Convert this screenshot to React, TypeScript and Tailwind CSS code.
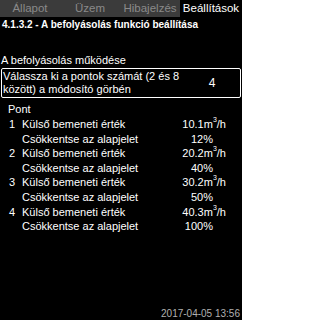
import React from "react";

const rows = [
  { n: "1", v: "10.1", p: "12%" },
  { n: "2", v: "20.2", p: "40%" },
  { n: "3", v: "30.2", p: "50%" },
  { n: "4", v: "40.3", p: "100%" },
];

function Unit({ v }: { v: string }) {
  return (
    <span className="whitespace-nowrap">
      {v}m<sup className="text-[7px] relative -top-[1px] align-top leading-none">3</sup>/h
    </span>
  );
}

export default function App() {
  return (
    <div
      className="w-[242px] h-[320px] bg-black text-white flex flex-col overflow-hidden"
      style={{ fontFamily: '"Liberation Sans", Arial, sans-serif' }}
    >
      <div className="flex h-[17px] bg-[#3b3b3b] text-[11.5px] leading-[17px]">
        <div className="w-[60px] text-center text-[#8a8a8a]">Állapot</div>
        <div className="w-[60px] text-center text-[#8a8a8a]">Üzem</div>
        <div className="w-[60px] text-center text-[#8a8a8a]">Hibajelzés</div>
        <div className="flex-1 text-center bg-black text-white">Beállítások</div>
      </div>
      <div className="pl-[2px] pt-[1px] text-[10px] font-bold leading-[13px]">
        4.1.3.2 - A befolyásolás funkció beállítása
      </div>
      <div className="pl-[1px] mt-[23px] text-[11px] leading-[12px]">
        A befolyásolás működése
      </div>
      <div className="mx-[1px] mt-[2px] h-[30px] border border-white rounded-[2px] flex items-center text-[11px] leading-[13px]">
        <div className="flex-1 pl-[1px]">
          Válassza ki a pontok számát (2 és 8<br />között) a módosító görbén
        </div>
        <div className="w-[54px] text-center pr-[2px] text-[12px]">4</div>
      </div>
      <div className="pl-[8px] mt-[4px] text-[11px] leading-[14px]">Pont</div>
      <div className="mt-[1px] text-[11px] leading-[14.6px]">
        {rows.map((r) => (
          <React.Fragment key={r.n}>
            <div className="flex">
              <div className="w-[22px] pl-[9px]">{r.n}</div>
              <div className="flex-1">Külső bemeneti érték</div>
              <div className="pr-[16px]">
                <Unit v={r.v} />
              </div>
            </div>
            <div className="flex">
              <div className="w-[22px]" />
              <div className="flex-1">Csökkentse az alapjelet</div>
              <div className="pr-[29px]">{r.p}</div>
            </div>
          </React.Fragment>
        ))}
      </div>
      <div className="mt-auto pr-[2px] pb-[1px] text-right text-[10px] leading-[11px] text-[#b0b0b0]">
        2017-04-05 13:56
      </div>
    </div>
  );
}
